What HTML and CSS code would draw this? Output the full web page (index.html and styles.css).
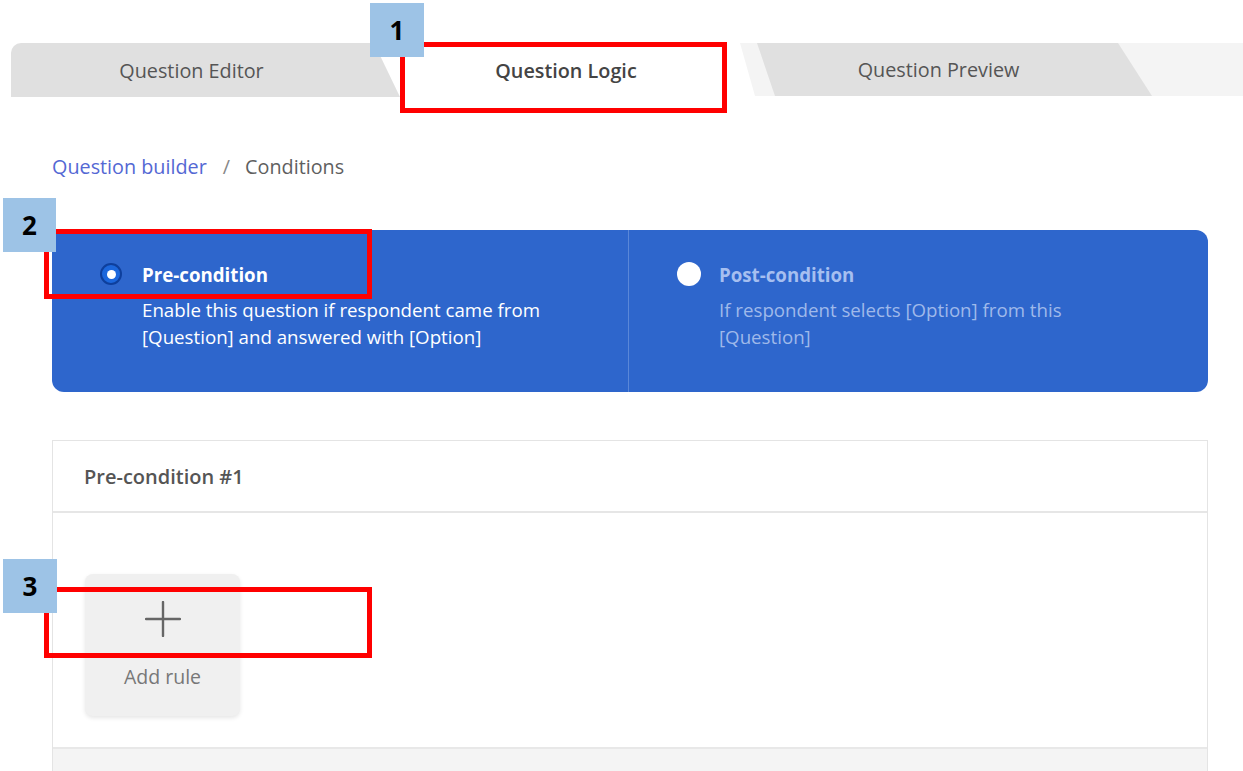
FILE: index.html
```html
<!DOCTYPE html>
<html lang="en">
<head>
<meta charset="utf-8">
<title>Question Logic</title>
<link rel="stylesheet" href="styles.css">
</head>
<body>
<div class="tabs">
  <div class="tab tab-editor">Question Editor</div>
  <div class="tab tab-logic">Question Logic</div>
  <div class="tab-rest">
    <div class="tab tab-preview">Question Preview</div>
  </div>
</div>

<main class="main">
  <nav class="breadcrumb">
    <span class="crumb-link">Question builder</span>
    <span class="crumb-sep">/</span>
    <span class="crumb-current">Conditions</span>
  </nav>

  <section class="panel">
    <div class="option option-active">
      <span class="radio radio-on"><span class="radio-dot"></span></span>
      <div class="option-text">
        <div class="option-title">Pre-condition</div>
        <div class="option-desc">Enable this question if respondent came from<br>[Question] and answered with [Option]</div>
      </div>
    </div>
    <div class="option option-idle">
      <span class="radio radio-off"></span>
      <div class="option-text">
        <div class="option-title">Post-condition</div>
        <div class="option-desc">If respondent selects [Option] from this<br>[Question]</div>
      </div>
    </div>
  </section>

  <section class="card">
    <header class="card-head">Pre-condition #1</header>
    <div class="card-body">
      <button class="add-rule" type="button">
        <svg class="plus" width="36" height="36" viewBox="0 0 36 36" aria-hidden="true">
          <path d="M18 1v34M1 18h34" stroke="#666" stroke-width="2.4" fill="none" stroke-linecap="round"/>
        </svg>
        <span class="add-label">Add rule</span>
      </button>
    </div>
    <div class="card-foot"></div>
  </section>
</main>

<div class="badge badge-1">1</div>
<div class="mark mark-1"></div>
<div class="badge badge-2">2</div>
<div class="mark mark-2"></div>
<div class="badge badge-3">3</div>
<div class="mark mark-3"></div>
</body>
</html>
```

FILE: styles.css
```css
* { box-sizing: border-box; }

body {
  margin: 0;
  background: #ffffff;
  font-family: "Open Sans", "Noto Sans", sans-serif;
  color: #555;
  position: relative;
  min-height: 771px;
  overflow: hidden;
}

/* Tabs */
.tabs {
  display: flex;
  margin: 43px 0 0 11px;
  height: 54px;
}

.tab {
  height: 54px;
  display: flex;
  align-items: center;
  justify-content: center;
  font-size: 19.8px;
  color: #555;
}

.tab-editor {
  width: 389px;
  flex: none;
  background: #e0e0e0;
  border-top-left-radius: 10px;
  clip-path: polygon(0 0, 363px 0, 100% 100%, 0 100%);
  padding-right: 28px;
}

.tab-logic {
  width: 340px;
  flex: none;
  background: #ffffff;
  font-weight: 600;
  color: #444;
  padding-right: 8px;
}

.tab-rest {
  flex: 1;
  display: flex;
  background: #f4f4f4;
  clip-path: polygon(0 0, 100% 0, 100% 100%, 15px 100%);
  height: 53px;
}

.tab-preview {
  width: 395px;
  flex: none;
  margin-left: 17px;
  height: 53px;
  background: #e0e0e0;
  border-top-right-radius: 10px;
  clip-path: polygon(0 0, calc(100% - 34px) 0, 100% 100%, 18px 100%);
  padding-left: 14px;
  padding-right: 46px;
}

/* Main */
.main {
  padding: 0 35px 0 52px;
}

.breadcrumb {
  margin-top: 57px;
  height: 26px;
  display: flex;
  align-items: center;
  font-size: 19.8px;
  line-height: 26px;
}

.crumb-link { color: #5468d4; }
.crumb-sep { color: #888; margin: 0 15px 0 16px; }
.crumb-current { color: #5f5f5f; }

/* Blue panel */
.panel {
  margin-top: 50px;
  height: 162px;
  background: #2e66cc;
  border-radius: 12px;
  display: flex;
}

.option {
  display: flex;
  align-items: flex-start;
  padding: 31px 20px 0 48px;
  gap: 20px;
}

.option-active {
  width: 577px;
  border-right: 1px solid #5a87d8;
}

.option-idle {
  flex: 1;
}

.radio {
  width: 22px;
  height: 22px;
  border-radius: 50%;
  flex: none;
  margin-top: 2px;
  display: flex;
  align-items: center;
  justify-content: center;
}

.radio-on {
  background: #1c67dc;
  border: 2px solid #0e3f9c;
}

.radio-dot {
  width: 9px;
  height: 9px;
  border-radius: 50%;
  background: #ffffff;
}

.radio-off {
  width: 24px;
  height: 24px;
  margin-top: 1px;
  background: #ffffff;
  margin-right: -2px;
}

.option-title {
  font-size: 18.7px;
  font-weight: 700;
  line-height: 27px;
  margin-bottom: 8px;
}

.option-desc {
  font-size: 18.7px;
  line-height: 27px;
}

.option-active .option-title,
.option-active .option-desc { color: #ffffff; }

.option-idle .option-title { color: #a6bff0; }
.option-idle .option-desc { color: #9fb9ea; }

/* Card */
.card {
  margin-top: 48px;
  border: 1px solid #e4e4e4;
  border-bottom: none;
}

.card-head {
  height: 72px;
  padding-left: 31px;
  display: flex;
  align-items: center;
  font-size: 20px;
  font-weight: 600;
  color: #555;
  border-bottom: 2px solid #e6e6e6;
}

.card-body {
  height: 234px;
  padding: 61px 0 0 32px;
}

.add-rule {
  width: 155px;
  height: 142px;
  border: none;
  border-radius: 8px;
  background: #f0f0f0;
  box-shadow: 0 2px 4px rgba(0, 0, 0, 0.10);
  display: flex;
  flex-direction: column;
  align-items: center;
  padding: 27px 0 0;
  font-family: inherit;
  cursor: pointer;
}

.plus { display: block; }

.add-label {
  margin-top: 27px;
  font-size: 19.5px;
  color: #777;
  line-height: 26px;
}

.card-foot {
  height: 40px;
  background: #f4f4f4;
  border-top: 2px solid #e8e8e8;
}

/* Annotation overlays */
.badge {
  position: absolute;
  width: 54px;
  height: 54px;
  background: #9dc3e6;
  color: #000;
  font-family: "Open Sans", "Liberation Sans", sans-serif;
  font-weight: 700;
  font-size: 26px;
  display: flex;
  align-items: center;
  justify-content: center;
  z-index: 3;
}

.badge-1 { left: 370px; top: 3px; }
.badge-2 { left: 3px; top: 198px; width: 53px; }
.badge-3 { left: 3px; top: 559px; }

.mark {
  position: absolute;
  border: 5px solid #ff0000;
  z-index: 2;
}

.mark-1 { left: 400px; top: 42px; width: 327px; height: 71px; }
.mark-2 { left: 44px; top: 229px; width: 328px; height: 70px; }
.mark-3 { left: 44px; top: 587px; width: 328px; height: 71px; }
```
